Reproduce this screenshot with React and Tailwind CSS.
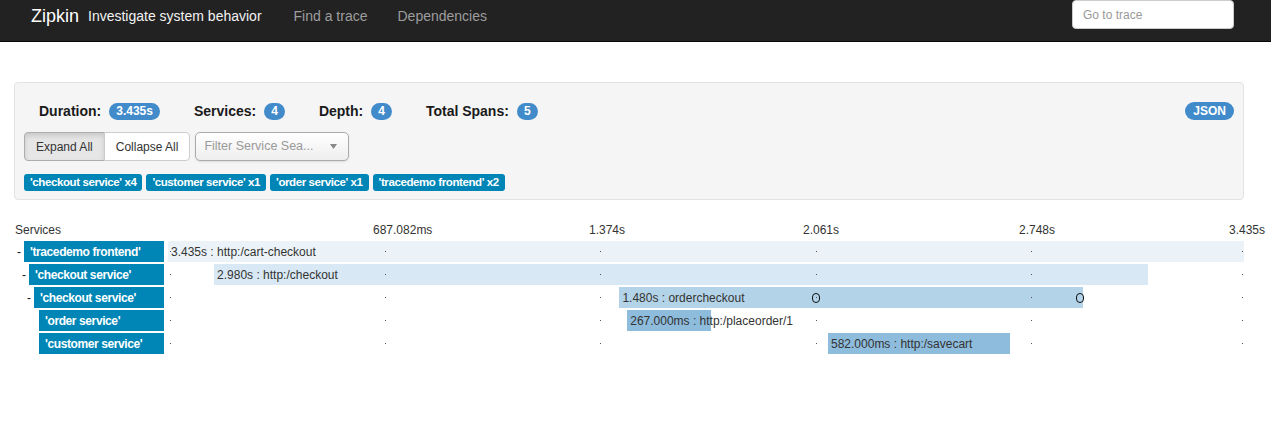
import React from 'react';

const TOTAL = 3435;
const AREA = 1076;

const spans = [
  { depth: 0, service: "'tracedemo frontend'", name: 'http:/cart-checkout', start: 0, dur: 3435, label: '3.435s', parent: true, color: 'bg-[#ebf3f9]' },
  { depth: 1, service: "'checkout service'", name: 'http:/checkout', start: 147, dur: 2980, label: '2.980s', parent: true, color: 'bg-[#d8e8f4]' },
  { depth: 2, service: "'checkout service'", name: 'ordercheckout', start: 1441, dur: 1480, label: '1.480s', parent: true, color: 'bg-[#b3d3e8]', annotations: [2068, 2912] },
  { depth: 3, service: "'order service'", name: 'http:/placeorder/1', start: 1466, dur: 267, label: '267.000ms', color: 'bg-[#8ebcdc]' },
  { depth: 3, service: "'customer service'", name: 'http:/savecart', start: 2107, dur: 582, label: '582.000ms', color: 'bg-[#8ebcdc]' },
];

const indent = ['pl-[2px]', 'pl-[7px]', 'pl-[12px]', 'pl-[17px]'];

const ticks = [
  { label: '687.082ms', left: 205 },
  { label: '1.374s', left: 421 },
  { label: '2.061s', left: 635 },
  { label: '2.748s', left: 851 },
  { label: '3.435s', left: 1061 },
];

const dots = [2, 217, 432, 648, 863, 1074];

const serviceTags = ["'checkout service' x4", "'customer service' x1", "'order service' x1", "'tracedemo frontend' x2"];

const px = (ms) => (ms / TOTAL) * AREA;

const Badge = ({ children }) => (
  <span className="ml-[8px] h-[17px] flex items-center rounded-full bg-[#428bca] px-[7px] text-[12px] font-bold leading-none text-white">
    {children}
  </span>
);

const Stat = ({ label, value }) => (
  <div className="flex items-center">
    <span className="text-[14px] font-bold text-[#1a1a1a]">{label}</span>
    <Badge>{value}</Badge>
  </div>
);

const App = () => {
  return (
    <div className="min-h-[437px] bg-white text-[#333]" style={{ fontFamily: '"Liberation Sans", Arial, sans-serif' }}>
      {/* Navbar */}
      <nav className="h-[42px] bg-[#222] border-b border-[#080808] flex items-start">
        <div className="h-[32px] flex items-center pl-[31px]">
          <span className="text-[18px] text-white">Zipkin</span>
          <span className="ml-[9px] text-[14px] text-[#f2f2f2]">Investigate system behavior</span>
        </div>
        <div className="h-[32px] flex items-center ml-[17px]">
          <a className="px-[15px] text-[14px] text-[#9d9d9d]">Find a trace</a>
          <a className="px-[15px] text-[14px] text-[#9d9d9d]">Dependencies</a>
        </div>
        <input
          placeholder="Go to trace"
          className="ml-auto mr-[37px] w-[162px] h-[29px] rounded-[4px] border border-[#ccc] bg-white px-[10px] text-[12px] text-[#555] placeholder:text-[#999] outline-none"
        />
      </nav>

      {/* Trace summary */}
      <div className="ml-[14px] mt-[40px] w-[1230px] rounded-[4px] border border-[#e3e3e3] bg-[#f5f5f5] px-[9px] pt-[17px] pb-[8px]">
        <div className="flex items-center h-[22px]">
          <div className="flex items-center gap-[34px] pl-[15px]">
            <Stat label="Duration:" value="3.435s" />
            <Stat label="Services:" value="4" />
            <Stat label="Depth:" value="4" />
            <Stat label="Total Spans:" value="5" />
          </div>
          <span className="ml-auto h-[18px] flex items-center rounded-full bg-[#428bca] px-[8px] text-[12px] font-bold leading-none text-white">
            JSON
          </span>
        </div>

        <div className="mt-[10px] flex items-center">
          <div className="flex">
            <button className="h-[29px] rounded-l-[4px] border border-[#adadad] bg-[#e6e6e6] px-[11px] text-[12px] text-[#333] shadow-[inset_0_3px_5px_rgba(0,0,0,0.125)]">
              Expand All
            </button>
            <button className="-ml-px h-[29px] rounded-r-[4px] border border-[#ccc] bg-white px-[11px] text-[12px] text-[#333]">
              Collapse All
            </button>
          </div>
          <div className="ml-[5px] h-[29px] w-[154px] flex items-center justify-between rounded-[5px] border border-[#aaa] bg-gradient-to-b from-white to-[#eee] pl-[8px] pr-[11px] shadow-[0_1px_2px_rgba(0,0,0,0.1)]">
            <span className="text-[12.5px] text-[#999]">Filter Service Sea...</span>
            <svg width="7" height="5" viewBox="0 0 7 5">
              <path d="M0 0 L7 0 L3.5 5 Z" fill="#888" />
            </svg>
          </div>
        </div>

        <div className="mt-[13px] flex gap-[4px]">
          {serviceTags.map((tag) => (
            <span
              key={tag}
              className="h-[17px] flex items-center rounded-[3px] bg-[#0086b6] px-[6px] text-[11.5px] font-bold tracking-[-0.4px] text-white"
            >
              {tag}
            </span>
          ))}
        </div>
      </div>

      {/* Timeline */}
      <div className="pl-[15px] mt-[22px]">
        <div className="flex h-[19px] text-[12px] leading-[14px]">
          <div className="w-[149px] pt-px">Services</div>
          <div className="relative ml-[4px] w-[1076px]">
            {ticks.map((t) => (
              <span key={t.label} className="absolute top-px whitespace-nowrap" style={{ left: t.left }}>
                {t.label}
              </span>
            ))}
          </div>
        </div>

        <div className="flex flex-col gap-[2px]">
          {spans.map((s, i) => (
            <div key={i} className="flex h-[21px]">
              <div className={`w-[149px] flex ${indent[s.depth]}`}>
                <span className="w-[7px] flex items-center text-[12px] text-[#111]">{s.parent ? '-' : ''}</span>
                <div className="flex-1 flex items-center bg-[#0086b6] pl-[6px] text-[12px] font-bold tracking-[-0.4px] text-white whitespace-nowrap">
                  {s.service}
                </div>
              </div>
              <div className="relative ml-[4px] w-[1076px] text-[12px]">
                <div
                  className={`absolute top-0 h-[21px] flex items-center pl-[3px] whitespace-nowrap ${s.color}`}
                  style={{ left: px(s.start), width: px(s.dur) }}
                >
                  <span className="relative z-10">
                    {s.label} : {s.name}
                  </span>
                </div>
                {dots.map((d) => (
                  <span key={d} className="absolute top-[10px] h-px w-px bg-[#5a4d66]" style={{ left: d }} />
                ))}
                {(s.annotations || []).map((a) => (
                  <span
                    key={a}
                    className="absolute top-[6px] h-[10px] w-[8px] rounded-full border-[1.5px] border-[#111]"
                    style={{ left: px(a) - 4 }}
                  />
                ))}
              </div>
            </div>
          ))}
        </div>
      </div>
    </div>
  );
};

export default App;
